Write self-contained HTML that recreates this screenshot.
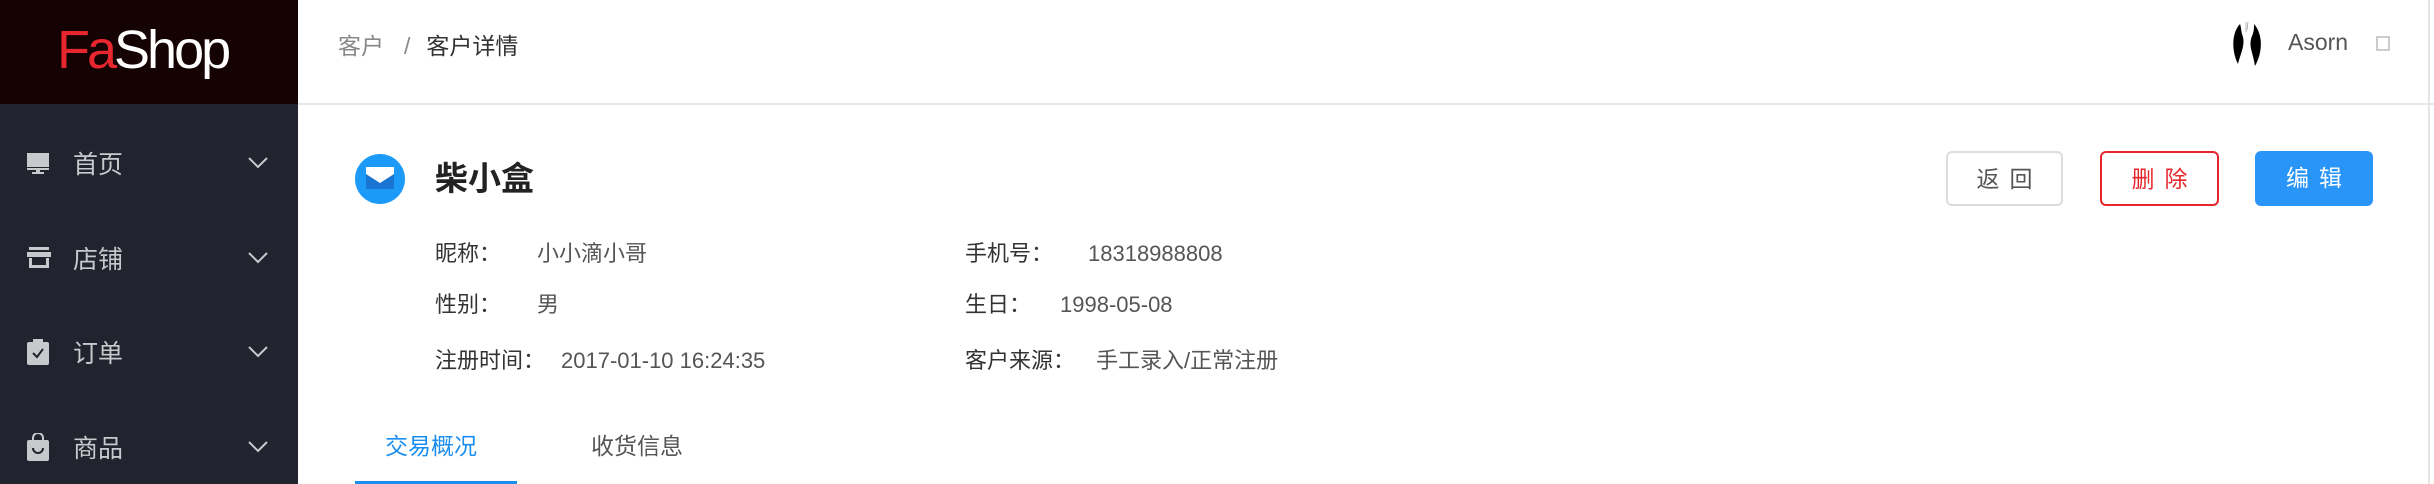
<!DOCTYPE html>
<html><head><meta charset="utf-8"><style>
*{margin:0;padding:0;box-sizing:border-box}
body{width:2434px;height:484px;overflow:hidden;background:#fff;font-family:"Liberation Sans","Noto Sans CJK SC",sans-serif;position:relative}
.abs{position:absolute;white-space:nowrap}
#side{position:absolute;left:0;top:0;width:298px;height:484px;background:#21232f}
#logo{position:absolute;left:0;top:0;width:298px;height:104px;background:#150203}
.mi{position:absolute;left:0;width:298px;height:60px;color:#c8c9cc;font-size:25px}
.mi .t{position:absolute;left:73px;top:50%;transform:translateY(-50%)}
.mi svg{position:absolute;top:50%;transform:translateY(-50%)}
.lbl{color:#333;font-size:22px}
.val{color:#555;font-size:22px}
.btn{position:absolute;top:151px;height:55px;border-radius:6px;font-size:23px;text-align:center;line-height:53px;letter-spacing:10px;text-indent:10px}
</style></head><body>
<div id="side">
 <div id="logo"><div class="abs" style="left:57px;top:18px;font-size:54px;font-weight:normal;letter-spacing:-3px;line-height:64px"><span style="color:#e8262d">Fa</span><span style="color:#fff">Shop</span></div></div>
 <div class="mi" style="top:133px"><svg style="left:26px" width="24" height="24" viewBox="0 0 24 24"><rect x="1" y="2" width="22" height="14" fill="#c8c9cc"/><rect x="1" y="17" width="22" height="2" fill="#c8c9cc"/><rect x="10" y="19" width="4" height="3" fill="#c8c9cc"/><rect x="6" y="21" width="12" height="2" fill="#c8c9cc"/></svg><span class="t">首页</span><svg style="left:248px" width="20" height="12" viewBox="0 0 20 12"><path d="M1 1l9 9 9-9" stroke="#c8c9cc" stroke-width="2" fill="none"/></svg></div>
 <div class="mi" style="top:228px"><svg style="left:26px" width="26" height="24" viewBox="0 0 26 24"><rect x="3" y="1" width="20" height="3" fill="#c8c9cc"/><path d="M1 6h24v5H1z" fill="#c8c9cc"/><path d="M3 12h3v7h14v-7h3v10H3z" fill="#c8c9cc"/></svg><span class="t">店铺</span><svg style="left:248px" width="20" height="12" viewBox="0 0 20 12"><path d="M1 1l9 9 9-9" stroke="#c8c9cc" stroke-width="2" fill="none"/></svg></div>
 <div class="mi" style="top:322px"><svg style="left:27px" width="22" height="26" viewBox="0 0 22 26"><rect x="0" y="3" width="22" height="23" rx="2" fill="#c8c9cc"/><rect x="6" y="0" width="10" height="5" fill="#c8c9cc"/><path d="M6 14l4 4 6-8" stroke="#21232f" stroke-width="2" fill="none"/></svg><span class="t">订单</span><svg style="left:248px" width="20" height="12" viewBox="0 0 20 12"><path d="M1 1l9 9 9-9" stroke="#c8c9cc" stroke-width="2" fill="none"/></svg></div>
 <div class="mi" style="top:417px"><svg style="left:27px" width="22" height="28" viewBox="0 0 22 28"><rect x="0" y="7" width="22" height="21" rx="2" fill="#c8c9cc"/><path d="M6 8V5a5 5 0 0 1 10 0v3" stroke="#c8c9cc" stroke-width="2" fill="none"/><path d="M6 15a5 5 0 0 0 10 0" stroke="#21232f" stroke-width="2" fill="none"/></svg><span class="t">商品</span><svg style="left:248px" width="20" height="12" viewBox="0 0 20 12"><path d="M1 1l9 9 9-9" stroke="#c8c9cc" stroke-width="2" fill="none"/></svg></div>
</div>
<div class="abs" style="left:298px;top:103px;width:2136px;height:2px;background:#e8e8e8"></div>
<div class="abs" style="left:2428px;top:0;width:2px;height:484px;background:#e4e4e4"></div>
<div class="abs" style="left:338px;top:27px;font-size:23px;color:#888">客户<span style="margin:0 16px 0 20px">/</span><span style="color:#333">客户详情</span></div>
<svg class="abs" style="left:2231px;top:20px" width="32" height="48" viewBox="0 0 32 48"><path d="M9 4C1 12 0 30 7 44C10 32 15 24 11 14C10 10 10 6 9 4Z" fill="#000"/><path d="M23 4C32 14 32 32 24 46C22 32 17 26 21 16C23 12 23 8 23 4Z" fill="#000"/><path d="M15 2v10M17 2l-1 8" stroke="#888" stroke-width="0.6"/></svg>
<div class="abs" style="left:2288px;top:29px;font-size:23px;color:#555">Asorn</div>
<div class="abs" style="left:2376px;top:36px;width:14px;height:15px;border:2px solid #ccc"></div>
<svg class="abs" style="left:354px;top:153px" width="52" height="52" viewBox="0 0 52 52"><ellipse cx="26" cy="26" rx="25" ry="25" fill="#1b9af7"/><rect x="12" y="14" width="28" height="22" fill="#fff"/><path d="M12 21l14 9 14-9v15H12z" fill="#1876d2"/></svg>
<div class="abs" style="left:435px;top:152px;font-size:33px;font-weight:bold;color:#222">柴小盒</div>
<div class="abs lbl" style="left:435px;top:236px">昵称：</div><div class="abs val" style="left:537px;top:236px">小小滴小哥</div>
<div class="abs lbl" style="left:435px;top:287px">性别：</div><div class="abs val" style="left:537px;top:287px">男</div>
<div class="abs lbl" style="left:435px;top:343px">注册时间：</div><div class="abs val" style="left:561px;top:348px">2017-01-10 16:24:35</div>
<div class="abs lbl" style="left:965px;top:236px">手机号：</div><div class="abs val" style="left:1088px;top:241px">18318988808</div>
<div class="abs lbl" style="left:965px;top:287px">生日：</div><div class="abs val" style="left:1060px;top:292px">1998-05-08</div>
<div class="abs lbl" style="left:965px;top:343px">客户来源：</div><div class="abs val" style="left:1096px;top:343px">手工录入/正常注册</div>
<div class="btn" style="left:1946px;width:117px;border:2px solid #ddd;color:#555">返回</div>
<div class="btn" style="left:2100px;width:119px;border:2px solid #e8262d;color:#e8262d">删除</div>
<div class="btn" style="left:2255px;width:118px;background:#2a95f8;color:#fff;line-height:55px">编辑</div>
<div class="abs" style="left:385px;top:427px;font-size:23px;color:#1b8ef0">交易概况</div>
<div class="abs" style="left:591px;top:427px;font-size:23px;color:#555">收货信息</div>
<div class="abs" style="left:355px;top:481px;width:162px;height:3px;background:#1b8ef0"></div>
</body></html>
